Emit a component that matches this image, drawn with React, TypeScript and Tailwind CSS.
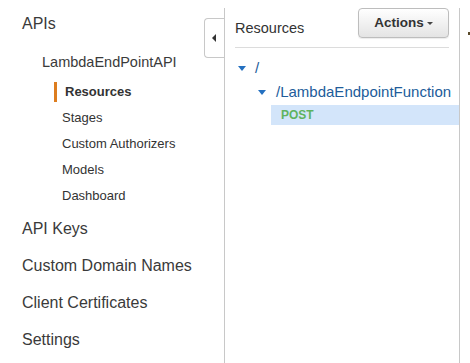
import React from "react";

const font = { fontFamily: '"Liberation Sans", Arial, Helvetica, sans-serif' };

function Caret({ color, w, h }: { color: string; w: number; h: number }) {
  return (
    <svg width={w} height={h} viewBox={`0 0 ${w} ${h}`} className="block shrink-0">
      <polygon points={`0,0 ${w},0 ${w / 2},${h}`} fill={color} />
    </svg>
  );
}

export default function App() {
  const subItems = ["Stages", "Custom Authorizers", "Models", "Dashboard"];
  const bottomItems = ["API Keys", "Custom Domain Names", "Client Certificates", "Settings"];
  return (
    <div className="w-[470px] h-[363px] bg-white flex overflow-hidden" style={font}>
      {/* Sidebar */}
      <div className="relative w-[224px] shrink-0 text-[#333]">
        <div className="mt-[14px] h-5 leading-5 pl-[22px] text-[16px] text-[#3a3a3a]">APIs</div>
        <div className="mt-[18px] h-5 leading-5 pl-[42px] text-[14.5px] text-[#3a3a3a]">LambdaEndPointAPI</div>
        <div className="mt-[7px]">
          <div className="h-[26px] flex items-center">
            <div className="ml-[54px] w-[3px] h-5 bg-[#dd7d1f]" />
            <span className="ml-[8px] text-[13px] font-bold text-[#333]">Resources</span>
          </div>
          {subItems.map((s) => (
            <div key={s} className="h-[26px] flex items-center pl-[62px] text-[13px] text-[#333]">
              {s}
            </div>
          ))}
        </div>
        <div className="mt-[1px]">
          {bottomItems.map((s) => (
            <div key={s} className="h-[37px] flex items-center pl-[22px] text-[16px] text-[#3a3a3a]">
              {s}
            </div>
          ))}
        </div>
        {/* collapse tab */}
        <div className="absolute left-[204px] top-[18px] w-[20px] h-[40px] border border-r-0 border-[#c8c8c8] rounded-l-[4px] bg-white flex items-center justify-center">
          <svg width="4" height="8" viewBox="0 0 4 8" className="block ml-[-2px]">
            <polygon points="4,0 4,8 0,4" fill="#333" />
          </svg>
        </div>
      </div>

      {/* Main panel */}
      <div className="mt-[8px] w-[236px] shrink-0 border-l border-r border-[#c8c8c8] h-[355px]">
        <div className="ml-[10px] mr-[10px] h-[40px] border-b border-[#dcdcdc] flex items-start justify-between">
          <div className="mt-[10px] h-5 leading-5 text-[14.5px] text-[#333]">Resources</div>
          <div className="w-[91px] h-[30px] border border-[#bdbdbd] rounded-[4px] bg-gradient-to-b from-white to-[#e4e4e4] flex items-center justify-center shadow-[0_1px_1px_rgba(0,0,0,0.08)]">
            <span className="text-[13.5px] font-bold text-[#333] leading-none">Actions</span>
            <span className="ml-[3px] mt-[1px]">
              <Caret color="#444" w={6} h={3} />
            </span>
          </div>
        </div>
        <div className="pt-[8px]">
          <div className="h-[24px] flex items-center pl-[13px]">
            <Caret color="#2470c0" w={8} h={5} />
            <span className="ml-[9px] text-[15px] text-[#215c9a] leading-5">/</span>
          </div>
          <div className="h-[24px] flex items-center pl-[33px]">
            <Caret color="#2470c0" w={8} h={5} />
            <span className="ml-[10px] text-[15px] text-[#215c9a] leading-5 whitespace-nowrap">/LambdaEndpointFunction</span>
          </div>
          <div className="mt-[1px] ml-[46px] h-[20px] bg-[#d3e5fa] flex items-center pl-[10px]">
            <span className="text-[12px] font-bold text-[#5fb360]">POST</span>
          </div>
        </div>
      </div>

      {/* right edge fragment */}
      <div className="pl-[8px] pt-[32px]">
        <div className="w-[2px] h-[3px] bg-[#5a4a2a]" />
      </div>
    </div>
  );
}
